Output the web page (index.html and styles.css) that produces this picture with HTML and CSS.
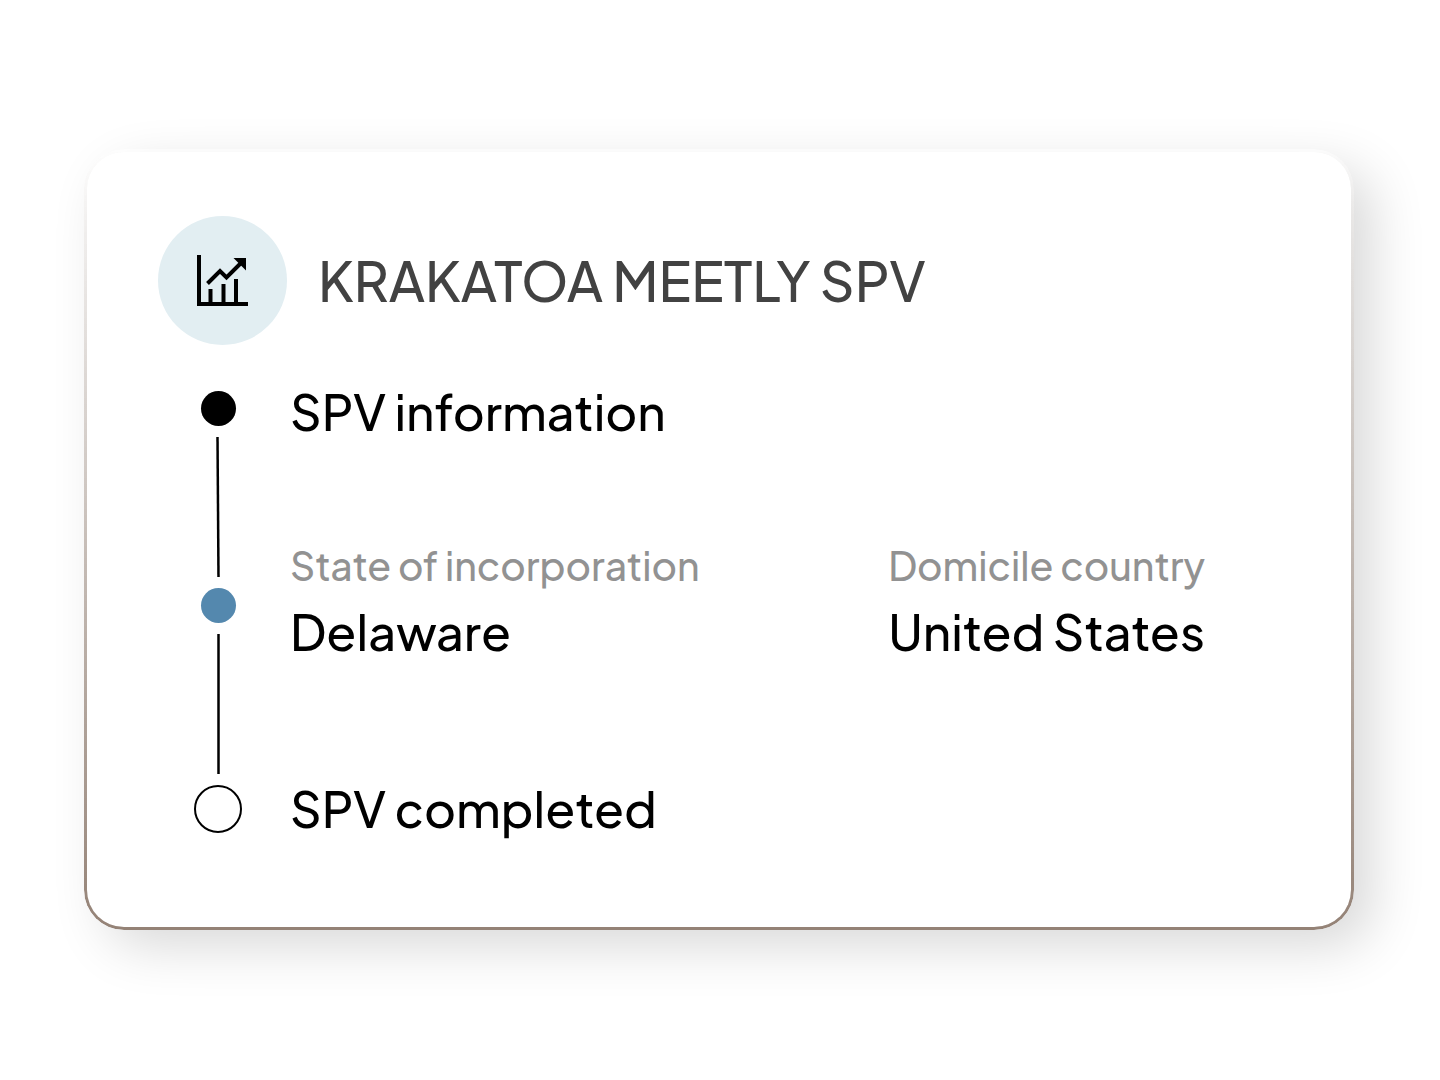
FILE: index.html
```html
<!DOCTYPE html>
<html lang="en">
<head>
  <meta charset="utf-8">
  <meta name="viewport" content="width=device-width, initial-scale=1">
  <title>Krakatoa Meetly SPV</title>
  <link rel="stylesheet" href="styles.css">
</head>
<body>
  <main class="card">
    <header class="card-header">
      <span class="badge">
        <svg width="51" height="51" viewBox="0 0 51 51" fill="none" stroke="#000" stroke-width="4" aria-hidden="true">
          <path d="M2 0V49H51M13.500 48V34M26.500 48V29M39 48V24"/>
          <path d="M10.500 28.500L23 16L29.500 22.500L45 7"/>
          <path d="M36.500 3H49V15.500Z" fill="#000" stroke="none"/>
        </svg>
      </span>
      <h1 class="card-title">KRAKATOA MEETLY SPV</h1>
    </header>
    <div class="progress">
      <div class="rail" aria-hidden="true">
        <span class="dot"></span>
        <svg class="connector" width="6" height="140" viewBox="0 0 6 140"><path d="M2.500 0L3.500 140" stroke="#000" stroke-width="2.500"/></svg>
        <span class="dot dot-current"></span>
        <svg class="connector" width="6" height="140" viewBox="0 0 6 140"><path d="M3.500 0V140" stroke="#000" stroke-width="2.500"/></svg>
        <span class="ring"></span>
      </div>
      <div class="steps">
        <h2 class="step-text">SPV information</h2>
        <dl class="fields">
          <div>
            <dt class="field-label">State of incorporation</dt>
            <dd class="step-text">Delaware</dd>
          </div>
          <div>
            <dt class="field-label">Domicile country</dt>
            <dd class="step-text">United States</dd>
          </div>
        </dl>
        <h2 class="step-text">SPV completed</h2>
      </div>
    </div>
  </main>
</body>
</html>
```

FILE: styles.css
```css
* {
  box-sizing: border-box;
  margin: 0;
}

body {
  min-height: 100vh;
  padding: 47px 89px 49px 87px;
  display: flex;
  align-items: center;
  background: #fff;
  color: #000;
  font-family: "Plus Jakarta Sans", Inter, "Liberation Sans", sans-serif;
}

.card {
  position: relative;
  flex: 1;
  padding: 64px 64px 94px 71px;
  border-radius: 37px;
  background: #fff;
  box-shadow: 20px 18px 54px rgba(0, 0, 0, 0.16);
}

/* Outline that fades out towards the top of the card */
.card::before {
  content: "";
  position: absolute;
  inset: -3px;
  padding: 3px;
  border-radius: 40px;
  background: linear-gradient(to bottom, rgba(255, 255, 255, 0.5), #948276);
  mask: linear-gradient(#000 0 0) content-box exclude, linear-gradient(#000 0 0);
  -webkit-mask-composite: xor;
  mask-composite: exclude;
  pointer-events: none;
}

.card-header {
  display: flex;
  align-items: center;
  gap: 31px;
}

.badge {
  display: flex;
  align-items: center;
  justify-content: center;
  flex: none;
  width: 129px;
  height: 129px;
  border-radius: 50%;
  background: #e2eef2;
}

.card-title {
  color: #424242;
  font-size: 54px;
  font-weight: 500;
  line-height: 64px;
}

.progress {
  display: flex;
  gap: 48px;
  margin-top: 46px;
  padding-left: 36px;
}

.rail {
  display: flex;
  flex-direction: column;
  align-items: center;
  flex: none;
  gap: 11px;
  width: 48px;
}

.dot {
  width: 35px;
  height: 35px;
  border-radius: 50%;
  background: #000;
}

.dot-current {
  background: #5488ae;
}

.ring {
  width: 48px;
  height: 48px;
  border: 2px solid #000;
  border-radius: 50%;
}

.steps {
  flex: 1;
  display: flex;
  flex-direction: column;
  justify-content: space-between;
  padding-bottom: 5px;
}

.step-text {
  font-size: 49px;
  font-weight: 500;
  line-height: 40px;
}

.fields {
  display: grid;
  grid-template-columns: 3fr 2fr;
  margin-bottom: 26px;
}

.field-label {
  margin-bottom: 21px;
  color: #929292;
  font-size: 39px;
  font-weight: 500;
  line-height: 48px;
}
```
